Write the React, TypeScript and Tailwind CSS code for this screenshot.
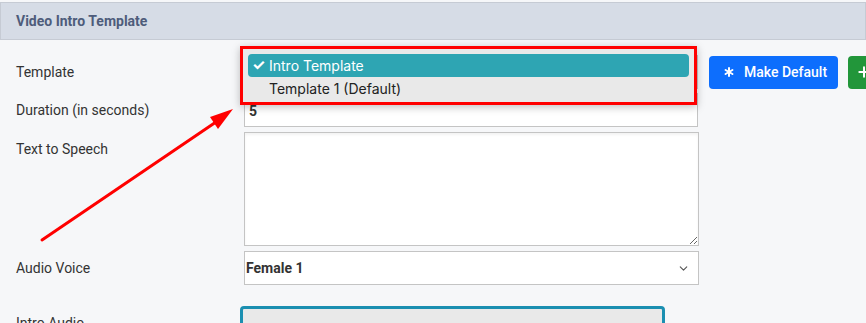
import { Asterisk, ChevronDown, Plus } from "lucide-react";

export default function App() {
  return (
    <div className="relative h-[323px] w-[866px] overflow-hidden bg-[#f6f7f9] font-['Roboto',sans-serif] text-[14px] text-[#333]">
      <div className="pt-[2px]">
        <div className="flex h-[38px] items-center border border-[#c6cbd4] bg-[#d6dce6] px-[15px]">
          <span className="text-[14px] font-bold text-[#4e5c7b]">Video Intro Template</span>
        </div>
      </div>

      <div className="grid grid-cols-[244px_1fr] gap-y-[4px] pt-[15px]">
        <label className="flex items-center pl-[16px]">Template</label>
        <div className="flex items-center">
          <div className="h-[34px] w-[454px] shrink-0 border border-[#c4c4c4] bg-white" />
          <button className="ml-[11px] flex h-[33px] w-[129px] shrink-0 items-center gap-[7px] whitespace-nowrap rounded-[4px] bg-[#0d6efd] pl-[12px] font-['Roboto',sans-serif] text-[14px] font-medium text-white">
            <Asterisk size={16} strokeWidth={3} />
            Make Default
          </button>
          <button className="ml-[10px] flex h-[33px] shrink-0 items-center rounded-[4px] bg-[#22963a] px-[8px] text-white">
            <Plus size={16} strokeWidth={3} />
          </button>
        </div>

        <label className="flex items-center pl-[16px]">Duration (in seconds)</label>
        <div className="flex h-[34px] w-[454px] items-center border border-[#c4c4c4] bg-white px-[4px] pt-[2px] font-bold">5</div>

        <label className="mt-[1px] pl-[16px] pt-[7px]">Text to Speech</label>
        <textarea
          readOnly
          className="mt-[1px] h-[114px] w-[455px] border border-[#c4c4c4] bg-white shadow-[inset_0_2px_3px_rgba(0,0,0,0.05)] outline-none"
        />

        <label className="mt-[1px] flex items-center pl-[16px]">Audio Voice</label>
        <div className="mt-[1px] flex h-[34px] w-[455px] items-center justify-between border border-[#c4c4c4] bg-white pl-[1px] pr-[8px] font-bold">
          <span>Female 1</span>
          <ChevronDown size={13} strokeWidth={2} className="text-[#555]" />
        </div>

        <label className="mt-[17px] pl-[16px] pt-[7px]">Intro Audio</label>
        <div className="ml-[-4px] mt-[17px] h-[40px] w-[425px] rounded-[4px] border-[3px] border-[#1b8fb1] bg-[#e9e9e9]" />
      </div>

      <div className="absolute left-[240px] top-[46px] w-[457px] border-[3px] border-[#ff0000] bg-[#e9e9e9] px-[5px] pb-[2px] pt-[5px] font-['Inter',sans-serif] text-[14px] shadow-[0_2px_8px_rgba(0,0,0,0.25)]">
        <div className="flex h-[23px] items-center rounded-[4px] bg-[#2ea5b3] pl-[4px] text-white">
          <span className="w-[17px] text-[15px] font-bold">✓</span>
          <span>Intro Template</span>
        </div>
        <div className="flex h-[23px] items-center pl-[21px] text-[#222]">Template 1 (Default)</div>
      </div>

      <svg className="pointer-events-none absolute left-0 top-0" width="866" height="323">
        <line x1="42" y1="240" x2="216" y2="122" stroke="#ff0000" strokeWidth="3" strokeLinecap="round" />
        <polygon points="233,109 210,117 218,129" fill="#ff0000" />
      </svg>
    </div>
  );
}
